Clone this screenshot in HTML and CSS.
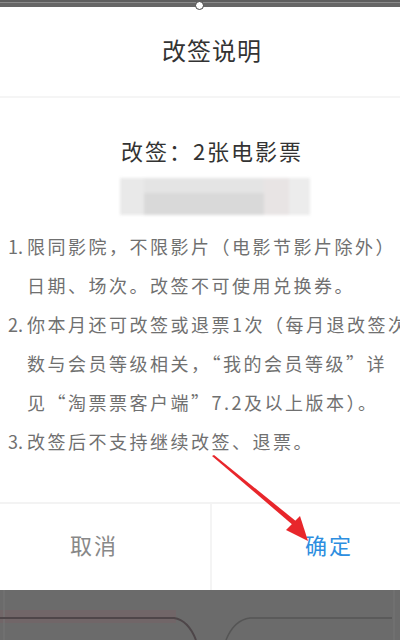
FILE: index.html
```html
<!DOCTYPE html>
<html lang="zh-CN">
<head>
  <meta charset="UTF-8" />
  <meta name="viewport" content="width=device-width, initial-scale=1.0"/>
  <title>改签说明</title>
  <link rel="stylesheet" href="styles.css">
</head>
<body>

<div class="top-bar">
  <span class="knob"></span>
</div>

<div class="dialog">
  <div class="dialog-title">改签说明</div>

  <div class="dialog-body">
    <div class="ticket-count">改签：2张电影票</div>
    <div class="blur-bar">
      <span class="blk b1"></span>
      <span class="blk b2"></span>
      <span class="blk b3"></span>
      <span class="blk b4"></span>
    </div>

    <ol class="rules">
      <li>
        <span class="num">1.</span>
        <span class="text">限同影院，不限影片（电影节影片除外）<br>日期、场次。改签不可使用兑换券。</span>
      </li>
      <li>
        <span class="num">2.</span>
        <span class="text">你本月还可改签或退票1次（每月退改签次<br>数与会员等级相关，“我的会员等级”详<br>见“淘票票客户端”7.2及以上版本）。</span>
      </li>
      <li>
        <span class="num">3.</span>
        <span class="text">改签后不支持继续改签、退票。</span>
      </li>
    </ol>
  </div>

  <div class="dialog-buttons">
    <button class="btn btn-cancel">取消</button>
    <button class="btn btn-ok">确定</button>
  </div>
</div>

<div class="bottom-area">
  <svg class="bottom-lines" width="400" height="50" viewBox="0 0 400 50">
    <rect x="0" y="20" width="176" height="13" fill="#716668" />
    <line x1="4" y1="0" x2="4" y2="50" stroke="#777" stroke-width="1" />
    <line x1="394" y1="0" x2="394" y2="50" stroke="#777" stroke-width="1" />
    <path d="M0 28 H174 Q188 30 196 50" fill="none" stroke="#4e4649" stroke-width="2" />
    <path d="M226 50 Q234 30 250 28 H392" fill="none" stroke="#555" stroke-width="1.5" />
  </svg>
</div>

<!-- red arrow drawn over the dialog -->
<svg class="arrow" width="400" height="640" viewBox="0 0 400 640">
  <path d="M212 456 L294 526 L297 522 L214 455 Z" fill="#e8262b" />
  <path d="M308 541 L286 530 L300 516 Z" fill="#e8262b" />
</svg>

</body>
</html>
```

FILE: styles.css
```css
body {
  margin: 0;
  padding: 0;
  width: 400px;
  height: 640px;
  overflow: hidden;
  background-color: #6b6b6b;
  font-family: "Noto Sans CJK SC", "Noto Sans", sans-serif;
  position: relative;
}

.top-bar {
  height: 7px;
  background: linear-gradient(#5e5e5e 0, #5e5e5e 2px, #8a8a8a 2px, #8a8a8a 3px, #666 3px);
  position: relative;
}

.knob {
  position: absolute;
  left: 195px;
  top: 1px;
  width: 7px;
  height: 7px;
  border-radius: 50%;
  background: #fff;
  border: 1.5px solid #444;
}

.dialog {
  background: #fff;
  height: 583px;
  display: flex;
  flex-direction: column;
}

.dialog-title {
  height: 89px;
  line-height: 86px;
  text-align: center;
  font-size: 24px;
  letter-spacing: 1px;
  color: #333;
  padding-left: 24px;
  border-bottom: 2px solid #f5f5f5;
}

.dialog-body {
  flex: 1;
  padding-top: 37px;
  overflow: hidden;
}

.ticket-count {
  height: 30px;
  line-height: 30px;
  text-align: center;
  font-size: 22px;
  letter-spacing: 2px;
  color: #333;
  padding-left: 24px;
}

.blur-bar {
  margin: 13px 0 0 120px;
  width: 190px;
  height: 37px;
  display: flex;
  background: #e8e8e8;
  filter: blur(1.5px);
}

.blk {
  height: 100%;
}

.b1 { width: 24px; background: #e9e9e9; }
.b2 { width: 120px; background: linear-gradient(#e4e4e4 0, #e4e4e4 40%, #d9d9d9 40%); }
.b3 { width: 25px; background: #e8e4e4; }
.b4 { width: 21px; background: #ececec; }

.rules {
  list-style: none;
  margin: 12px 0 0 0;
  padding: 0 0 0 8px;
  white-space: nowrap;
  font-size: 18px;
  letter-spacing: 2.5px;
  line-height: 39px;
  color: #707070;
}

.rules li {
  display: flex;
}

.num {
  width: 19px;
  flex-shrink: 0;
  letter-spacing: 0;
}

.dialog-buttons {
  height: 86px;
  display: flex;
  border-top: 2px solid #f3f3f3;
}

.btn {
  flex: 1;
  border: none;
  background: #fff;
  font-family: inherit;
  font-size: 22px;
  letter-spacing: 2px;
  padding: 0 0 6px 0;
  cursor: pointer;
}

.btn-cancel {
  color: #888;
  border-right: 2px solid #f4f4f4;
  flex: 0 0 212px;
  padding-right: 22px;
}

.btn-ok {
  color: #2d8ee0;
  padding-left: 46px;
}

.bottom-area {
  height: 50px;
}

.bottom-lines {
  display: block;
}

.arrow {
  position: absolute;
  left: 0;
  top: 0;
  pointer-events: none;
}
```
